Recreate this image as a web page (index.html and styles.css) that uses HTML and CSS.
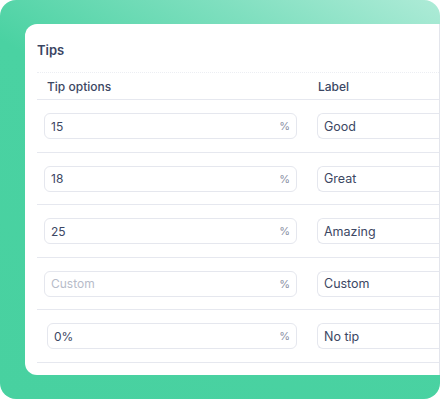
FILE: index.html
```html
<!DOCTYPE html>
<html lang="en">

<head>
    <meta charset="UTF-8">
    <meta name="viewport" content="width=device-width, initial-scale=1.0">
    <title>Tips</title>
    <link rel="stylesheet" href="styles.css">
</head>

<body>
    <div class="frame">
        <div class="card">
            <h2 class="title">Tips</h2>

            <div class="tips-table">
                <div class="row head">
                    <div class="col-option">Tip options</div>
                    <div class="col-label">Label</div>
                </div>

                <div class="row">
                    <div class="field pct"><span class="value">15</span><span class="unit">%</span></div>
                    <div class="field label"><span class="value">Good</span></div>
                </div>
                <div class="row">
                    <div class="field pct"><span class="value">18</span><span class="unit">%</span></div>
                    <div class="field label"><span class="value">Great</span></div>
                </div>
                <div class="row">
                    <div class="field pct"><span class="value">25</span><span class="unit">%</span></div>
                    <div class="field label"><span class="value">Amazing</span></div>
                </div>
                <div class="row">
                    <div class="field pct"><span class="placeholder">Custom</span><span class="unit">%</span></div>
                    <div class="field label"><span class="value">Custom</span></div>
                </div>
                <div class="row last">
                    <div class="field pct"><span class="value">0%</span><span class="unit">%</span></div>
                    <div class="field label"><span class="value">No tip</span></div>
                </div>
            </div>
        </div>
    </div>
</body>

</html>
```

FILE: styles.css
```css
body {
    margin: 0;
    padding: 0;
    font-family: 'Inter', 'Noto Sans', sans-serif;
    color: #3c4763;
    overflow: hidden;
}

.frame {
    width: 440px;
    height: 399px;
    box-sizing: border-box;
    padding: 24px 0 0 25px;
    border-radius: 16px;
    overflow: hidden;
    background: linear-gradient(30deg, #48d1a0 0%, #4ad2a2 55%, #7fdfbf 80%, #aeebd7 100%);
}

.card {
    height: 351px;
    box-sizing: border-box;
    padding: 16px 0 0 12px;
    background-color: white;
    border-radius: 12px 0 0 12px;
    border-right: 1px solid #e3e5ec;
}

.title {
    margin: 0 0 12px 0;
    font-size: 13px;
    line-height: 20px;
    font-weight: 600;
    color: #3a4562;
}

.tips-table {
    border-top: 1px dotted #eceef3;
}

.row {
    display: flex;
    align-items: center;
    gap: 20px;
    padding: 13px 0 12.5px 7px;
    border-bottom: 1px solid #e6e8ef;
}

.row.head {
    gap: 0;
    padding: 0;
    height: 26px;
    font-size: 12px;
    font-weight: 500;
    color: #3c4763;
}

.col-option {
    width: 260px;
    padding-left: 10px;
}

.col-label {
    padding-left: 11px;
}

.row.last {
    padding-left: 10px;
}

.field {
    height: 26px;
    box-sizing: border-box;
    display: flex;
    align-items: center;
    justify-content: space-between;
    padding: 0 6px;
    border: 1px solid #e5e7ee;
    border-radius: 6px;
    font-size: 12px;
}

.field.pct {
    width: 253px;
}

.row.last .field.pct {
    width: 250px;
}

.field.label {
    flex: 1;
    border-right: none;
    border-radius: 6px 0 0 6px;
    font-size: 12.5px;
}

.value {
    color: #3c4763;
}

.placeholder {
    color: #b7bcc9;
}

.unit {
    font-size: 11px;
    color: #8a91a4;
}
```
